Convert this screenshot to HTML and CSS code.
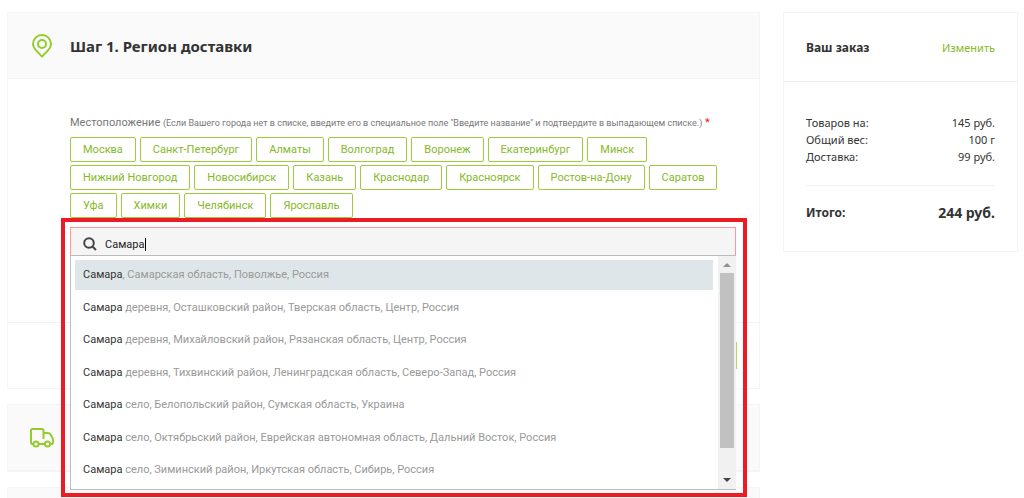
FILE: index.html
```html
<!DOCTYPE html>
<html lang="ru">
<head>
<meta charset="utf-8">
<meta name="viewport" content="width=device-width, initial-scale=1">
<title>Оформление заказа</title>
<link rel="stylesheet" href="styles.css">
</head>
<body>
<div class="page">
  <main class="steps">
    <section class="card">
      <header class="card-head">
        <svg class="icon-pin" viewBox="0 0 20 24" aria-hidden="true"><path d="M10 22.6 3.2 15.4A9 9 0 0 1 1 10a9 9 0 0 1 18 0 9 9 0 0 1-2.200 5.400Z"/><circle cx="10" cy="10" r="4"/></svg>
        <h1 class="card-title">Шаг 1. Регион доставки</h1>
      </header>
      <div class="card-body">
        <label class="field-label" for="city">Местоположение <small class="field-hint">(Если Вашего города нет в списке, введите его в специальное поле "Введите название" и подтвердите в выпадающем списке.)</small> <span class="required">*</span></label>
        <div class="cities">
          <button class="city" type="button">Москва</button>
          <button class="city" type="button">Санкт-Петербург</button>
          <button class="city" type="button">Алматы</button>
          <button class="city" type="button">Волгоград</button>
          <button class="city" type="button">Воронеж</button>
          <button class="city" type="button">Екатеринбург</button>
          <button class="city" type="button">Минск</button>
          <button class="city" type="button">Нижний Новгород</button>
          <button class="city" type="button">Новосибирск</button>
          <button class="city" type="button">Казань</button>
          <button class="city" type="button">Краснодар</button>
          <button class="city" type="button">Красноярск</button>
          <button class="city" type="button">Ростов-на-Дону</button>
          <button class="city" type="button">Саратов</button>
          <button class="city" type="button">Уфа</button>
          <button class="city" type="button">Химки</button>
          <button class="city" type="button">Челябинск</button>
          <button class="city" type="button">Ярославль</button>
        </div>
        <div class="search">
          <svg class="icon-search" viewBox="0 0 14 14" aria-hidden="true"><circle cx="6" cy="6" r="4.800"/><path d="m9.500 9.500 3.500 3.500"/></svg>
          <div class="search-entry">
            <input class="search-input" id="city" type="text" value="Самара" autocomplete="off">
            <span class="caret"></span>
          </div>
          <div class="dropdown">
            <ul class="options">
              <li class="option option-active"><b class="match">Самара</b>, Самарская область, Поволжье, Россия</li>
              <li class="option"><b class="match">Самара</b> деревня, Осташковский район, Тверская область, Центр, Россия</li>
              <li class="option"><b class="match">Самара</b> деревня, Михайловский район, Рязанская область, Центр, Россия</li>
              <li class="option"><b class="match">Самара</b> деревня, Тихвинский район, Ленинградская область, Северо-Запад, Россия</li>
              <li class="option"><b class="match">Самара</b> село, Белопольский район, Сумская область, Украина</li>
              <li class="option"><b class="match">Самара</b> село, Октябрьский район, Еврейская автономная область, Дальний Восток, Россия</li>
              <li class="option"><b class="match">Самара</b> село, Зиминский район, Иркутская область, Сибирь, Россия</li>
            </ul>
            <div class="scrollbar" aria-hidden="true">
              <svg class="scroll-arrow" viewBox="0 0 8 4"><path fill="#909090" d="M0 4 4 0l4 4Z"/></svg>
              <div class="scroll-track"><div class="scroll-thumb"></div></div>
              <svg class="scroll-arrow" viewBox="0 0 8 4"><path fill="#444" d="m0 0 4 4 4-4Z"/></svg>
            </div>
          </div>
          <div class="highlight"></div>
        </div>
      </div>
      <footer class="card-foot">
        <button class="next" type="button" aria-label="Далее"></button>
      </footer>
    </section>
    <section class="card">
      <header class="card-head">
        <svg class="icon-truck" viewBox="0 0 24 20" aria-hidden="true"><path d="M3.500 16H2.500A1.500 1.500 0 0 1 1 14.500V2.500A1.500 1.500 0 0 1 2.500 1h9.500A1.500 1.500 0 0 1 13.500 2.500V11M8.500 16h6M13.500 5h4.500q1.500 0 2.300 1.300L22.500 10q.5.900.5 2v2.500a1.500 1.500 0 0 1-1.500 1.500h-1"/><circle cx="6" cy="16" r="2.600"/><circle cx="17.500" cy="16" r="2.600"/></svg>
      </header>
    </section>
    <section class="card">
      <header class="card-head"></header>
    </section>
  </main>
  <aside class="order">
    <header class="order-head">
      <h2 class="order-title">Ваш заказ</h2>
      <a class="order-edit" href="#">Изменить</a>
    </header>
    <div class="order-body">
      <dl class="order-lines">
        <div class="order-line"><dt>Товаров на:</dt><dd>145 руб.</dd></div>
        <div class="order-line"><dt>Общий вес:</dt><dd>100 г</dd></div>
        <div class="order-line"><dt>Доставка:</dt><dd>99 руб.</dd></div>
      </dl>
      <div class="order-total"><span>Итого:</span><strong class="total-sum">244 руб.</strong></div>
    </div>
  </aside>
</div>
</body>
</html>
```

FILE: styles.css
```css
* {
  box-sizing: border-box;
}

html,
body {
  height: 100%;
  overflow: hidden;
}

body {
  margin: 0;
  background: #fff;
  color: #333;
  font-family: "Noto Sans", "Open Sans", sans-serif;
  font-size: 11px;
}

h1, h2, dl, dd, ul {
  margin: 0;
  padding: 0;
}

button, input {
  font: inherit;
}

.page {
  display: flex;
  align-items: flex-start;
  gap: 23px;
  height: 100%;
  padding: 12px 6px 0 7px;
  overflow: hidden;
}

.steps {
  flex: 1;
  min-width: 0;
  display: grid;
  gap: 15px;
}

.card {
  border: 1px solid #f5f5f5;
}

.card-head {
  display: flex;
  align-items: center;
  gap: 16px;
  min-height: 66px;
  padding: 0 22px;
  background: #fafafa;
  border-bottom: 1px solid #f3f3f3;
}

.card-title {
  font-size: 15px;
  line-height: 20px;
}

.icon-pin,
.icon-truck {
  flex: none;
  width: 24px;
  height: 24px;
  fill: none;
  stroke: #95cb2d;
  stroke-width: 2;
  stroke-linejoin: round;
}

.icon-search {
  flex: none;
  width: 14px;
  height: 14px;
  fill: none;
  stroke: #444;
  stroke-width: 2;
}

.card-body {
  padding: 36px 23px 61px 62px;
  font-family: Roboto, "Noto Sans", sans-serif;
}

.field-label {
  display: block;
  color: #777;
  line-height: 16px;
}

.field-hint {
  font-size: 9px;
}

.required {
  color: #ed1c24;
}

.cities {
  display: flex;
  flex-wrap: wrap;
  gap: 3px 4px;
  margin: 6px 0 9px;
}

.city {
  height: 25px;
  padding: 0 12px;
  border: 1px solid #9ccb3b;
  border-radius: 2px;
  background: #fff;
  color: #86b927;
}

.search {
  position: relative;
  display: flex;
  align-items: center;
  gap: 8px;
  height: 34px;
  padding: 0 12px;
  border: 1px solid #f99;
  background: #f5f5f5;
}

.search-entry {
  position: relative;
  flex: 1;
}

.search-input {
  display: block;
  width: 100%;
  padding: 0;
  border: 0;
  outline: 0;
  background: none;
  color: #222;
}

.caret {
  position: absolute;
  top: 0;
  left: 40px;
  width: 1px;
  height: 13px;
  background: #000;
}

.dropdown {
  position: absolute;
  top: 27px;
  left: -1px;
  right: -1px;
  display: flex;
  height: 235px;
  border: 1px solid #bbb;
  border-right: 0;
  background: #fff;
}

.options {
  flex: 1;
  display: flex;
  flex-direction: column;
  justify-content: space-between;
  padding: 4px 5px 4px 4px;
  list-style: none;
}

.option {
  padding: 0 8px;
  color: #999;
  line-height: 30px;
  white-space: nowrap;
}

.option-active {
  background: #dfe6e9;
}

.match {
  color: #333;
  font-weight: 400;
}

.scrollbar {
  display: flex;
  flex-direction: column;
  align-items: center;
  width: 18px;
  padding: 7px 2px;
  background: #f1f1f1;
}

.scroll-arrow {
  width: 8px;
  height: 4px;
}

.scroll-track {
  flex: 1;
  width: 100%;
  padding: 6px 0;
}

.scroll-thumb {
  height: 88%;
  background: #c1c1c1;
}

.highlight {
  position: absolute;
  top: -10px;
  left: -10px;
  right: -12px;
  height: 279px;
  border: 4px solid #ed1c24;
}

.card-foot {
  display: flex;
  justify-content: flex-end;
  padding: 19px 22px;
  border-top: 1px solid #f3f3f3;
}

.next {
  width: 90px;
  height: 27px;
  border: 0;
  background: #b5d567;
}

.order {
  flex: none;
  width: 235px;
  border: 1px solid #f3f3f3;
}

.order-head {
  display: flex;
  align-items: center;
  justify-content: space-between;
  height: 69px;
  padding: 0 22px;
  border-bottom: 1px solid #eee;
}

.order-title {
  font-size: 12px;
}

.order-edit {
  color: #86b927;
  text-decoration: none;
}

.order-body {
  padding: 32px 22px 27px;
}

.order-lines {
  padding-bottom: 20px;
  border-bottom: 1px solid #f0f0f0;
}

.order-line {
  display: flex;
  justify-content: space-between;
  line-height: 17px;
}

.order-total {
  display: flex;
  align-items: center;
  justify-content: space-between;
  padding-top: 16px;
  font-size: 12px;
  font-weight: 700;
  line-height: 22px;
}

.total-sum {
  font-size: 14px;
  font-weight: 700;
}
```
